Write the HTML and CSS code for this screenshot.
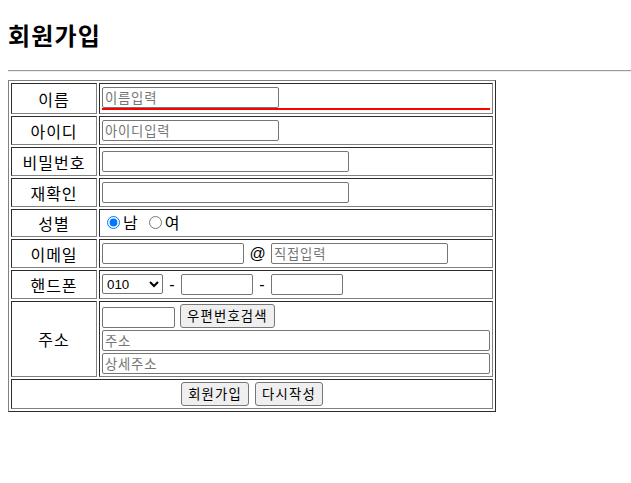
FILE: index.html
```html
<!DOCTYPE html>
<html lang="ko">
<head>
<meta charset="utf-8">
<title>회원가입</title>
<link rel="stylesheet" href="styles.css">
</head>
<body>
<h2 class="title">회원가입</h2>
<hr class="rule">
<form class="form">
<table class="join">
  <tr>
    <td class="label">이름</td>
    <td class="field"><div class="underline"><input class="in in-name" type="text" placeholder="이름입력"></div></td>
  </tr>
  <tr>
    <td class="label">아이디</td>
    <td class="field"><input class="in in-name" type="text" placeholder="아이디입력"></td>
  </tr>
  <tr>
    <td class="label">비밀번호</td>
    <td class="field"><input class="in in-pw" type="password"></td>
  </tr>
  <tr>
    <td class="label">재확인</td>
    <td class="field"><input class="in in-pw" type="password"></td>
  </tr>
  <tr>
    <td class="label">성별</td>
    <td class="field field-radio"><label class="radio"><input class="rd" type="radio" name="g" checked>남</label><label class="radio radio2"><input class="rd" type="radio" name="g">여</label></td>
  </tr>
  <tr>
    <td class="label">이메일</td>
    <td class="field"><input class="in in-mail" type="text"><span class="at">@</span><input class="in in-name" type="text" placeholder="직접입력"></td>
  </tr>
  <tr>
    <td class="label">핸드폰</td>
    <td class="field"><select class="sel"><option>010</option><option>011</option></select><span class="dash">-</span><input class="in in-tel" type="text"><span class="dash">-</span><input class="in in-tel" type="text"></td>
  </tr>
  <tr>
    <td class="label">주소</td>
    <td class="field addr">
      <div class="addr-line"><input class="in in-zip" type="text"><button class="btn btn-zip" type="button">우편번호검색</button></div>
      <input class="in in-full" type="text" placeholder="주소">
      <input class="in in-full" type="text" placeholder="상세주소">
    </td>
  </tr>
  <tr>
    <td class="actions" colspan="2"><button class="btn" type="submit">회원가입</button><button class="btn btn-reset" type="reset">다시작성</button></td>
  </tr>
</table>
</form>
</body>
</html>
```
FILE: styles.css
```css
html, body {
  margin: 0;
  padding: 0;
  background: #fff;
}
body {
  padding: 0 8px 8px 8px;
  font-family: "Noto Sans CJK KR", "Liberation Sans", sans-serif;
  color: #000;
}
.title {
  margin: 0;
  padding-top: 19px;
  font-size: 24px;
  line-height: 32px;
  font-weight: bold;
  letter-spacing: 1.2px;
}
.rule {
  margin: 19px -8px 8px 0;
  border: 0;
  border-top: 1px solid #9a9a9a;
  border-bottom: 1px solid #eeeeee;
  height: 0;
}
.form {
  margin: 0;
}
.join {
  width: 488px;
  border: 1px outset #808080;
  border-spacing: 2px;
  border-collapse: separate;
}
.join td {
  border: 1px inset #808080;
}
.label {
  width: 84px;
  padding: 0 1px;
  text-align: center;
  font-size: 16px;
  line-height: 20px;
  letter-spacing: 1px;
}
.field {
  padding: 3px 2px 3px 2px;
  font-size: 13.33px;
  line-height: 21px;
  white-space: nowrap;
}
.field-radio {
  padding-top: 2px;
  padding-bottom: 3px;
}
.underline {
  border-bottom: 2px solid #ff0000;
  height: 21px;
}
.in {
  box-sizing: border-box;
  height: 21px;
  margin: 0;
  padding: 1px 2px;
  border: 1px solid #767676;
  border-radius: 2px;
  font-family: "Noto Sans CJK KR", "Liberation Sans", sans-serif;
  font-size: 13.33px;
  line-height: 17px;
  letter-spacing: 0.8px;
  vertical-align: top;
  background: #fff;
  color: #000;
}
.in::placeholder {
  color: #757575;
}
.in-name { width: 177px; }
.in-pw { width: 247px; }
.in-mail { width: 142px; }
.in-tel { width: 72px; }
.in-zip { width: 73px; }
.in-full {
  display: block;
  width: 388px;
  margin-top: 2px;
}
.at {
  display: inline-block;
  width: 27px;
  text-align: center;
  font-family: "Liberation Sans", sans-serif;
  font-size: 16px;
  line-height: 21px;
  vertical-align: top;
}
.dash {
  display: inline-block;
  width: 18px;
  text-align: center;
  font-family: "Liberation Sans", sans-serif;
  font-size: 16px;
  line-height: 21px;
  vertical-align: top;
}
.sel {
  box-sizing: border-box;
  width: 61px;
  height: 20px;
  margin: 0;
  border: 1px solid #767676;
  border-radius: 2px;
  font-family: "Liberation Sans", sans-serif;
  font-size: 13.33px;
  vertical-align: top;
  background: #fff;
  color: #000;
}
.radio {
  display: inline-flex;
  align-items: center;
  font-size: 16px;
  line-height: 21px;
  vertical-align: top;
}
.radio2 {
  margin-left: 6px;
}
.rd {
  width: 13px;
  height: 13px;
  margin: 0 3px 0 5px;
  accent-color: #0075ff;
}
.addr {
  padding-top: 2px;
  padding-bottom: 2px;
}
.addr-line {
  display: flex;
  align-items: flex-end;
  gap: 5px;
  height: 24px;
}
.btn {
  box-sizing: border-box;
  height: 24px;
  margin: 0;
  padding: 0 6px;
  border: 1px solid #767676;
  border-radius: 3px;
  background: #efefef;
  color: #000;
  font-family: "Noto Sans CJK KR", "Liberation Sans", sans-serif;
  font-size: 13.33px;
  line-height: 20px;
  letter-spacing: 1.2px;
  vertical-align: top;
}
.btn-reset {
  margin-left: 6px;
}
.actions {
  padding: 2px 1px;
  text-align: center;
  line-height: 24px;
}
```
